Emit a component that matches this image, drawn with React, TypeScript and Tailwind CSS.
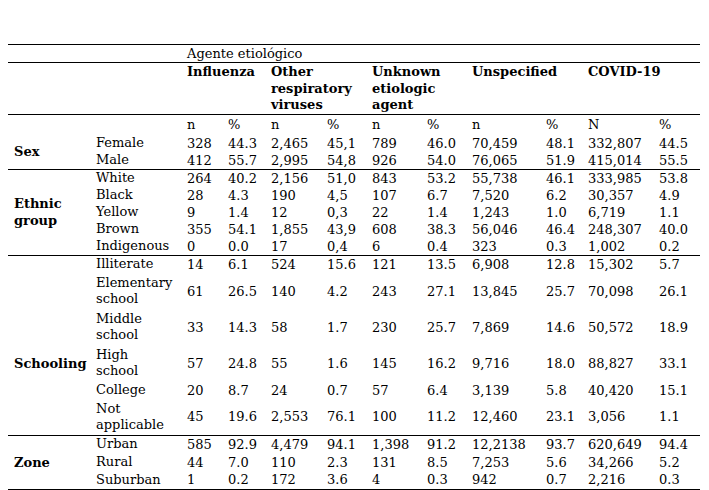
import React from "react";

type Row = { sub: string[]; v: string[]; h: string; group?: { label: string[]; span: number }; groupCell?: boolean; last?: boolean };

const rows: Row[] = [
  { sub: [], v: ["n", "%", "n", "%", "n", "%", "n", "%", "N", "%"], groupCell: true, h: "h-[20px]" },
  { sub: ["Female"], v: ["328", "44.3", "2,465", "45,1", "789", "46.0", "70,459", "48.1", "332,807", "44.5"], group: { label: ["Sex"], span: 2 }, h: "h-[17px]" },
  { sub: ["Male"], v: ["412", "55.7", "2,995", "54,8", "926", "54.0", "76,065", "51.9", "415,014", "55.5"], last: true, h: "h-[16px]" },
  { sub: ["White"], v: ["264", "40.2", "2,156", "51,0", "843", "53.2", "55,738", "46.1", "333,985", "53.8"], group: { label: ["Ethnic", "group"], span: 5 }, h: "h-[17px]" },
  { sub: ["Black"], v: ["28", "4.3", "190", "4,5", "107", "6.7", "7,520", "6.2", "30,357", "4.9"], h: "h-[17px]" },
  { sub: ["Yellow"], v: ["9", "1.4", "12", "0,3", "22", "1.4", "1,243", "1.0", "6,719", "1.1"], h: "h-[17px]" },
  { sub: ["Brown"], v: ["355", "54.1", "1,855", "43,9", "608", "38.3", "56,046", "46.4", "248,307", "40.0"], h: "h-[17px]" },
  { sub: ["Indigenous"], v: ["0", "0.0", "17", "0,4", "6", "0.4", "323", "0.3", "1,002", "0.2"], last: true, h: "h-[17px]" },
  { sub: ["Illiterate"], v: ["14", "6.1", "524", "15.6", "121", "13.5", "6,908", "12.8", "15,302", "5.7"], groupCell: true, h: "h-[18px]" },
  { sub: ["Elementary", "school"], v: ["61", "26.5", "140", "4.2", "243", "27.1", "13,845", "25.7", "70,098", "26.1"], groupCell: true, h: "h-[36px]" },
  { sub: ["Middle", "school"], v: ["33", "14.3", "58", "1.7", "230", "25.7", "7,869", "14.6", "50,572", "18.9"], groupCell: true, h: "h-[36px]" },
  { sub: ["High", "school"], v: ["57", "24.8", "55", "1.6", "145", "16.2", "9,716", "18.0", "88,827", "33.1"], group: { label: ["Schooling"], span: 1 }, h: "h-[36px]" },
  { sub: ["College"], v: ["20", "8.7", "24", "0.7", "57", "6.4", "3,139", "5.8", "40,420", "15.1"], groupCell: true, h: "h-[18px]" },
  { sub: ["Not", "applicable"], v: ["45", "19.6", "2,553", "76.1", "100", "11.2", "12,460", "23.1", "3,056", "1.1"], groupCell: true, last: true, h: "h-[36px]" },
  { sub: ["Urban"], v: ["585", "92.9", "4,479", "94.1", "1,398", "91.2", "12,2138", "93.7", "620,649", "94.4"], group: { label: ["Zone"], span: 3 }, h: "h-[18px]" },
  { sub: ["Rural"], v: ["44", "7.0", "110", "2.3", "131", "8.5", "7,253", "5.6", "34,266", "5.2"], h: "h-[18px]" },
  { sub: ["Suburban"], v: ["1", "0.2", "172", "3.6", "4", "0.3", "942", "0.7", "2,216", "0.3"], last: true, h: "h-[18px]" },
];

const widths = [82, 91, 41, 43, 56, 45, 55, 45, 74, 42, 71, 47];

const headers: string[][] = [
  ["Influenza"],
  ["Other", "respiratory", "viruses"],
  ["Unknown", "etiologic", "agent"],
  ["Unspecified"],
  ["COVID-19"],
];

export default function App() {
  return (
    <div className="bg-white w-[709px] h-[490px] overflow-hidden pt-[44px] pl-[8px] text-black" style={{ fontFamily: '"DejaVu Serif", "Liberation Serif", serif' }}>
      <table className="border-collapse table-fixed w-[692px] text-[13px] leading-[17px]">
        <colgroup>
          {widths.map((w, i) => (
            <col key={i} style={{ width: w }} />
          ))}
        </colgroup>
        <tbody>
          <tr className="border-t border-b border-black h-[18px]">
            <td colSpan={2}></td>
            <td colSpan={10} className="pl-[6px] align-middle">Agente etiológico</td>
          </tr>
          <tr className="border-b border-black h-[52px]">
            <td colSpan={2}></td>
            {headers.map((h, i) => (
              <td key={i} colSpan={2} className="pl-[6px] align-top font-bold leading-[16.5px] pt-[1px]">
                {h.map((l, j) => (
                  <div key={j}>{l}</div>
                ))}
              </td>
            ))}
          </tr>
          {rows.map((r, i) => (
            <tr key={i} className={(r.last ? "border-b border-black " : "") + r.h}>
              {r.group ? (
                <td rowSpan={r.group.span} className="pl-[6px] align-middle font-bold leading-[17px]">
                  {r.group.label.map((l, j) => (
                    <div key={j}>{l}</div>
                  ))}
                </td>
              ) : r.groupCell ? (
                <td></td>
              ) : null}
              <td className="pl-[6px] align-middle leading-[16px] whitespace-nowrap">
                {r.sub.map((l, j) => (
                  <div key={j}>{l}</div>
                ))}
              </td>
              {r.v.map((v, j) => (
                <td key={j} className="pl-[6px] align-middle whitespace-nowrap">{v}</td>
              ))}
            </tr>
          ))}
        </tbody>
      </table>
    </div>
  );
}
